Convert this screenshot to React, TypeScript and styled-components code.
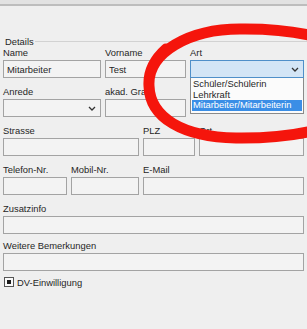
import React from 'react';
import styled, { createGlobalStyle } from 'styled-components';

const GlobalStyle = createGlobalStyle`
    body {
        margin: 0;
        background: #efefef;
        font-family: "Liberation Sans", Arial, sans-serif;
        color: #262626;
    }
`;

const Chevron = () => (
    <svg width="8" height="5" viewBox="0 0 8 5">
        <path d="M1 1 L4 4 L7 1" fill="none" stroke="#333" strokeWidth="1.3" />
    </svg>
);

type FieldProps = { label: string, w: number, value?: string };

const TextField = ({ label, w, value }: FieldProps) => (
    <Field $w={w}>
        <Label>{label}</Label>
        <Input readOnly value={value ?? ''} />
    </Field>
);

const SelectField = ({ label, w }: FieldProps) => (
    <Field $w={w}>
        <Label>{label}</Label>
        <Select>
            <Chevron />
        </Select>
    </Field>
);

const artOptions = ['Schüler/Schülerin', 'Lehrkraft', 'Mitarbeiter/Mitarbeiterin'];

export default function App() {
    return (
        <Page>
            <GlobalStyle />
            <TopStrip />
            <GroupHeader>
                <span>Details</span>
                <GroupLine />
            </GroupHeader>
            <Form>
                <Row>
                    <TextField label='Name' w={98} value='Mitarbeiter' />
                    <TextField label='Vorname' w={81} value='Test' />
                    <Field $w={114} style={{ position: 'relative' }}>
                        <Label>Art</Label>
                        <Select $active>
                            <Chevron />
                        </Select>
                        <DropList>
                            {artOptions.map((o, i) => (
                                <Option key={o} $selected={i === artOptions.length - 1}>{o}</Option>
                            ))}
                        </DropList>
                    </Field>
                </Row>
                <Row>
                    <SelectField label='Anrede' w={98} />
                    <TextField label='akad. Grad' w={81} />
                </Row>
                <Row>
                    <TextField label='Strasse' w={136} />
                    <TextField label='PLZ' w={52} />
                    <TextField label='Ort' w={105} />
                </Row>
                <Row>
                    <TextField label='Telefon-Nr.' w={64} />
                    <TextField label='Mobil-Nr.' w={68} />
                    <TextField label='E-Mail' w={161} />
                </Row>
                <Row>
                    <TextField label='Zusatzinfo' w={301} />
                </Row>
                <Row $tight>
                    <TextField label='Weitere Bemerkungen' w={301} />
                </Row>
                <CheckRow>
                    <CheckBox><CheckMark /></CheckBox>
                    <span>DV-Einwilligung</span>
                </CheckRow>
            </Form>
            <Scribble width="307" height="329" viewBox="0 0 307 329">
                <path
                    d="M149 86 C147 52 190 29 240 29 C322 28 374 52 374 84 C374 117 318 139 236 138 C183 137 150 118 149 86 C148 70 156 58 166 49"
                    fill="none"
                    stroke="#f5150c"
                    strokeWidth="11"
                    strokeLinecap="round"
                />
            </Scribble>
        </Page>
    );
}

const Page = styled.div`
    position: relative;
    width: 307px;
    height: 329px;
    overflow: hidden;
    background: #efefef;
    font-size: 9.4px;
`;

const TopStrip = styled.div`
    height: 4px;
    background: #e2e2e2;
    border-bottom: 2px solid #bdbdbd;
`;

const GroupHeader = styled.div`
    display: flex;
    align-items: center;
    gap: 1px;
    margin-top: 30px;
    padding-left: 5px;
    height: 11px;
    line-height: 11px;
`;

const GroupLine = styled.div`
    flex: 1;
    height: 1px;
    background: #d2d2d2;
`;

const Form = styled.div`
    display: flex;
    flex-direction: column;
    gap: 8px;
    padding: 0 3px;
`;

const Row = styled.div<{ $tight?: boolean }>`
    display: flex;
    gap: 4px;
    margin-top: ${p => p.$tight ? '-2px' : '0'};
`;

const Field = styled.div<{ $w: number }>`
    display: flex;
    flex-direction: column;
    width: ${p => p.$w}px;
`;

const Label = styled.div`
    height: 12px;
    line-height: 12px;
    margin-bottom: 1px;
    white-space: nowrap;
`;

const Input = styled.input`
    box-sizing: border-box;
    width: 100%;
    height: 18px;
    margin: 0;
    padding: 0 3px;
    border: 1px solid #a3a3a3;
    background: #f3f3f3;
    font: inherit;
    color: #262626;
    outline: none;
`;

const Select = styled.div<{ $active?: boolean }>`
    box-sizing: border-box;
    height: 18px;
    display: flex;
    align-items: center;
    justify-content: flex-end;
    padding-right: 4px;
    border: 1px solid ${p => p.$active ? '#4f8fc9' : '#a3a3a3'};
    background: ${p => p.$active ? '#d3e5f6' : '#f3f3f3'};
`;

const DropList = styled.div`
    position: absolute;
    top: 31px;
    left: 0;
    width: 100%;
    box-sizing: border-box;
    padding: 1px 1px 2px;
    background: #fbfbfb;
    border: 1px solid #8a8a8a;
    border-top: none;
    z-index: 2;
`;

const Option = styled.div<{ $selected?: boolean }>`
    height: 10.5px;
    line-height: 10.5px;
    padding-left: 1px;
    white-space: nowrap;
    background: ${p => p.$selected ? '#3a8ee6' : 'transparent'};
    color: ${p => p.$selected ? '#fff' : '#262626'};
`;

const CheckRow = styled.div`
    display: flex;
    align-items: center;
    gap: 3px;
    margin-top: -3px;
    padding-left: 1px;
    height: 12px;
`;

const CheckBox = styled.div`
    box-sizing: border-box;
    width: 10px;
    height: 10px;
    border: 1px solid #555;
    background: #fafafa;
    display: flex;
    align-items: center;
    justify-content: center;
`;

const CheckMark = styled.div`
    width: 4px;
    height: 4px;
    background: #1c1c1c;
`;

const Scribble = styled.svg`
    position: absolute;
    top: 0;
    left: 0;
    pointer-events: none;
    z-index: 5;
`;
